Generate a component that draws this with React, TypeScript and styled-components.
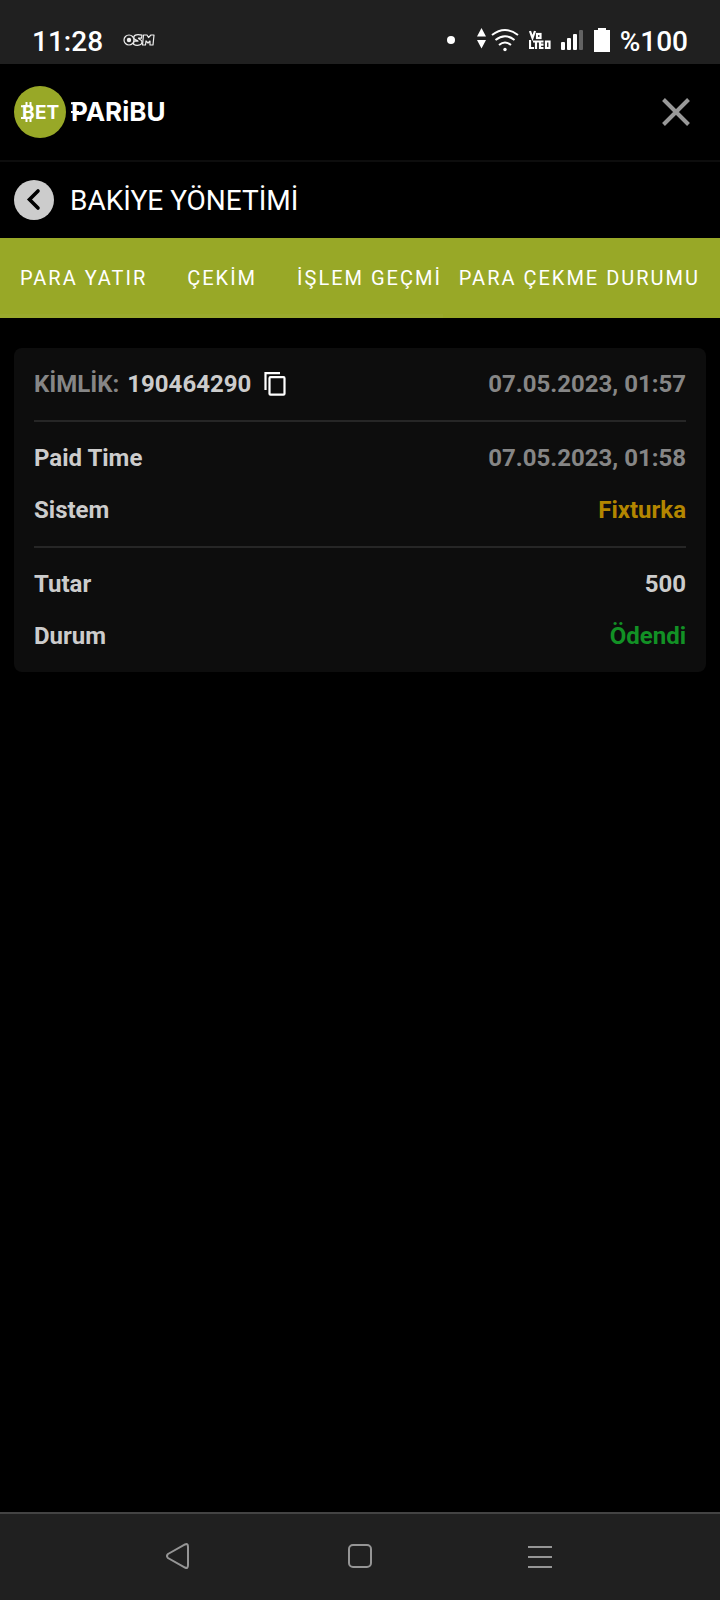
import React from "react";
import styled, { createGlobalStyle } from "styled-components";

const Global = createGlobalStyle`
  *, *::before, *::after { box-sizing: border-box; }
  html, body { margin: 0; padding: 0; background: #000; }
  body { font-family: Roboto, "Noto Sans", sans-serif; color: #fff; }
  button { border: 0; padding: 0; background: none; color: inherit; font: inherit; cursor: pointer; }
  svg { display: block; flex: none; }
`;

const Screen = styled.div`
  min-height: 100vh;
  display: flex;
  flex-direction: column;
`;

const StatusBar = styled.div`
  height: 64px;
  padding: 16px 32px 0;
  background: #202020;
  display: flex;
  align-items: center;
  justify-content: space-between;
`;

const StatusGroup = styled.div<{ $gap: number }>`
  display: flex;
  align-items: center;
  gap: ${(p) => p.$gap}px;
`;

const StatusText = styled.span`
  padding-top: 4px;
  font-size: 28px;
  line-height: 32px;
  font-weight: 500;
`;

const Header = styled.header`
  height: 98px;
  padding: 0 24px 0 14px;
  border-bottom: 2px solid #0d0d0d;
  display: flex;
  align-items: center;
  justify-content: space-between;
`;

const LogoLink = styled.a`
  display: block;
`;

const CloseButton = styled.button`
  width: 40px;
  height: 40px;
  display: grid;
  place-items: center;
`;

const TitleRow = styled.div`
  height: 76px;
  padding: 0 14px;
  display: flex;
  align-items: center;
  gap: 16px;
`;

const BackButton = styled.button`
  width: 40px;
  height: 40px;
  border-radius: 50%;
  display: grid;
  place-items: center;
`;

const Title = styled.h1`
  margin: 0;
  padding-top: 2px;
  font-size: 28px;
  line-height: 32px;
  font-weight: 400;
`;

const Tabs = styled.nav`
  height: 80px;
  background: #98a827;
  display: flex;
`;

const Tab = styled.button`
  flex: none;
  padding: 0 20px;
  font-size: 20px;
  line-height: 24px;
  letter-spacing: 2px;
  white-space: nowrap;
  color: #fff;
`;

const ScrollTabs = styled.div`
  flex: 1;
  min-width: 0;
  display: flex;
  overflow: hidden;
  border-bottom: 4px solid #9aaa2d;
  padding-top: 4px;

  ${Tab}:last-child { padding-right: 0; }
`;

const PinnedTab = styled(Tab)`
  padding-left: 16px;
`;

const Content = styled.main`
  flex: 1;
  padding: 30px 14px;
`;

const Card = styled.section`
  padding: 0 20px;
  border-radius: 8px;
  background: #0d0d0d;
`;

const Group = styled.div`
  padding: 10px 0;

  & + & { border-top: 2px solid #262626; }
`;

const Row = styled.div`
  height: 52px;
  display: flex;
  align-items: center;
  justify-content: space-between;
  font-size: 24px;
  line-height: 28px;
  font-weight: 700;
  color: #ccc;
`;

const IdCell = styled.span`
  display: flex;
  align-items: center;
  gap: 8px;
`;

const Value = styled.span<{ $color?: string }>`
  color: ${(p) => p.$color ?? "#ccc"};
`;

const CopyButton = styled.button`
  display: grid;
  place-items: center;
  width: 32px;
  height: 32px;
`;

const NavBar = styled.nav`
  height: 88px;
  padding: 0 90px 2px;
  background: #202020;
  border-top: 2px solid #434343;
  display: flex;
`;

const NavButton = styled.button`
  flex: 1;
  display: grid;
  place-items: center;
`;

const OsmIcon = () => (
  <svg width="32" height="14" viewBox="0 0 32 14" role="img" aria-label="OSM">
    <g fill="#202020" stroke="#eee" strokeWidth="1.2" strokeLinejoin="round">
      <ellipse cx="6" cy="7" rx="5" ry="5" />
      <ellipse cx="6" cy="7" rx="1.600" ry="1.600" fill="#eee" />
      <path d="M19 2.200C13 .5 10 2.500 11 5.500C11.500 7.200 15 7 15 8.200H11L10.500 11.200C13 12.800 19 13 19 8.800C19 6.800 15.500 6 15.500 5.200H18.500Z" />
      <path d="M20.500 2H24L25.500 4.500L28 2H31L30 12H27V8L25 10L23 8L22.500 12H19.500Z" />
    </g>
  </svg>
);

const DotIcon = () => (
  <svg width="20" height="8" viewBox="0 0 20 8" aria-hidden="true">
    <circle cx="4" cy="4" r="4" fill="#fff" />
  </svg>
);

const WifiIcon = () => (
  <svg width="42" height="24" viewBox="0 0 42 24" role="img" aria-label="Wi-Fi">
    <path d="M4.500 0L9 8.500H0ZM0 12H9L4.500 20.500Z" fill="#fff" />
    <g fill="none" stroke="#fff" strokeWidth="2">
      <path d="M15 7Q28 -3 41 7" />
      <path d="M18.500 12Q28 4.500 37.500 12" />
      <path d="M22 17Q28 12 34 17" />
    </g>
    <circle cx="28" cy="21.500" r="1.700" fill="#fff" />
  </svg>
);

const VolteIcon = () => (
  <svg width="22" height="20" viewBox="0 0 22 20" role="img" aria-label="VoLTE">
    <g fill="none" stroke="#fff" strokeWidth="2.200">
      <path d="M1 1L3.500 8L6 1" />
      <rect x="8" y="4" width="3.500" height="4" />
      <path d="M1 10V18H5M4 11.500H10M7 11V19M14.500 11.500H11V18H14.500M11 14.700H14.500M17 11.500H20.500V18H17Z" />
    </g>
  </svg>
);

const SignalIcon = () => (
  <svg width="23" height="20" viewBox="0 0 23 20" role="img" aria-label="Sinyal">
    <g fill="#fff">
      <rect x="0" y="12" width="4" height="8" rx="1" />
      <rect x="6" y="8" width="4" height="12" rx="1" />
      <rect x="12" y="4" width="4" height="16" rx="1" />
      <rect x="18" y="0" width="4" height="20" rx="1" fill="#636363" />
    </g>
  </svg>
);

const BatteryIcon = () => (
  <svg width="16" height="24" viewBox="0 0 16 24" role="img" aria-label="Pil">
    <path d="M4 0H12V2H16V24H0V2H4Z" fill="#fff" />
  </svg>
);

const Logo = () => (
  <svg width="154" height="52" viewBox="0 0 154 52" role="img" aria-label="Bet Paribu">
    <circle cx="26" cy="26" r="26" fill="#98a827" />
    <g fill="#fff" fontFamily="Inter, sans-serif" fontWeight="700">
      <text x="8" y="33" fontSize="19">B</text>
      <text x="21" y="33" fontSize="19">ET</text>
      <text x="57" y="35" fontSize="26">PARiBU</text>
    </g>
    <path
      d="M12.500 16V20M16.500 16V20M12.500 32V36M16.500 32V36M7 20.200H12M7 32H12M57 17.200H61M57 26H65"
      stroke="#fff"
      strokeWidth="2"
    />
  </svg>
);

const TABS = ["PARA YATIR", "ÇEKİM", "İŞLEM GEÇMİ"];

export default function App() {
  return (
    <Screen>
      <Global />
      <StatusBar>
        <StatusGroup $gap={20}>
          <StatusText>11:28</StatusText>
          <OsmIcon />
        </StatusGroup>
        <StatusGroup $gap={10}>
          <DotIcon />
          <WifiIcon />
          <VolteIcon />
          <SignalIcon />
          <BatteryIcon />
          <StatusText>%100</StatusText>
        </StatusGroup>
      </StatusBar>
      <Header>
        <LogoLink href="#"><Logo /></LogoLink>
        <CloseButton aria-label="Kapat">
          <svg width="28" height="28" viewBox="0 0 28 28">
            <path d="M1.500 1.500L26.500 26.500M26.500 1.500L1.500 26.500" stroke="#999" strokeWidth="4" />
          </svg>
        </CloseButton>
      </Header>
      <TitleRow>
        <BackButton aria-label="Geri">
          <svg width="40" height="40" viewBox="0 0 40 40">
            <circle cx="20" cy="20" r="20" fill="#ccc" />
            <path d="M24 11L15.500 19.500L24 28" fill="none" stroke="#000" strokeWidth="3.600" strokeLinecap="round" />
          </svg>
        </BackButton>
        <Title>BAKİYE YÖNETİMİ</Title>
      </TitleRow>
      <Tabs>
        <ScrollTabs>
          {TABS.map((t) => <Tab key={t}>{t}</Tab>)}
        </ScrollTabs>
        <PinnedTab>PARA ÇEKME DURUMU</PinnedTab>
      </Tabs>
      <Content>
        <Card>
          <Group>
            <Row>
              <IdCell>
                <Value $color="#868686">KİMLİK:</Value>
                <Value>190464290</Value>
                <CopyButton aria-label="Kopyala">
                  <svg width="22" height="24" viewBox="0 0 22 24" fill="none" stroke="#fff" strokeWidth="2.200">
                    <path d="M1.500 18V1.200H16" />
                    <rect x="5.500" y="5.200" width="15" height="17.500" rx="1" />
                  </svg>
                </CopyButton>
              </IdCell>
              <Value $color="#868686">07.05.2023, 01:57</Value>
            </Row>
          </Group>
          <Group>
            <Row><span>Paid Time</span><Value $color="#868686">07.05.2023, 01:58</Value></Row>
            <Row><span>Sistem</span><Value $color="#b38600">Fixturka</Value></Row>
          </Group>
          <Group>
            <Row><span>Tutar</span><Value>500</Value></Row>
            <Row><span>Durum</span><Value $color="#129125">Ödendi</Value></Row>
          </Group>
        </Card>
      </Content>
      <NavBar>
        <NavButton aria-label="Geri">
          <svg width="28" height="26" viewBox="0 0 28 26">
            <path d="M2 11L19 1.500Q22 0 22 4V22Q22 26 19 24.500L2 15Q0 13 2 11Z" fill="none" stroke="#959595" strokeWidth="2" />
          </svg>
        </NavButton>
        <NavButton aria-label="Ana ekran">
          <svg width="24" height="24" viewBox="0 0 24 24">
            <rect x="1" y="1" width="22" height="22" rx="4" fill="none" stroke="#959595" strokeWidth="2" />
          </svg>
        </NavButton>
        <NavButton aria-label="Son uygulamalar">
          <svg width="24" height="24" viewBox="0 0 24 24">
            <path d="M0 3H24M0 13H24M0 23H24" stroke="#959595" strokeWidth="2" />
          </svg>
        </NavButton>
      </NavBar>
    </Screen>
  );
}
